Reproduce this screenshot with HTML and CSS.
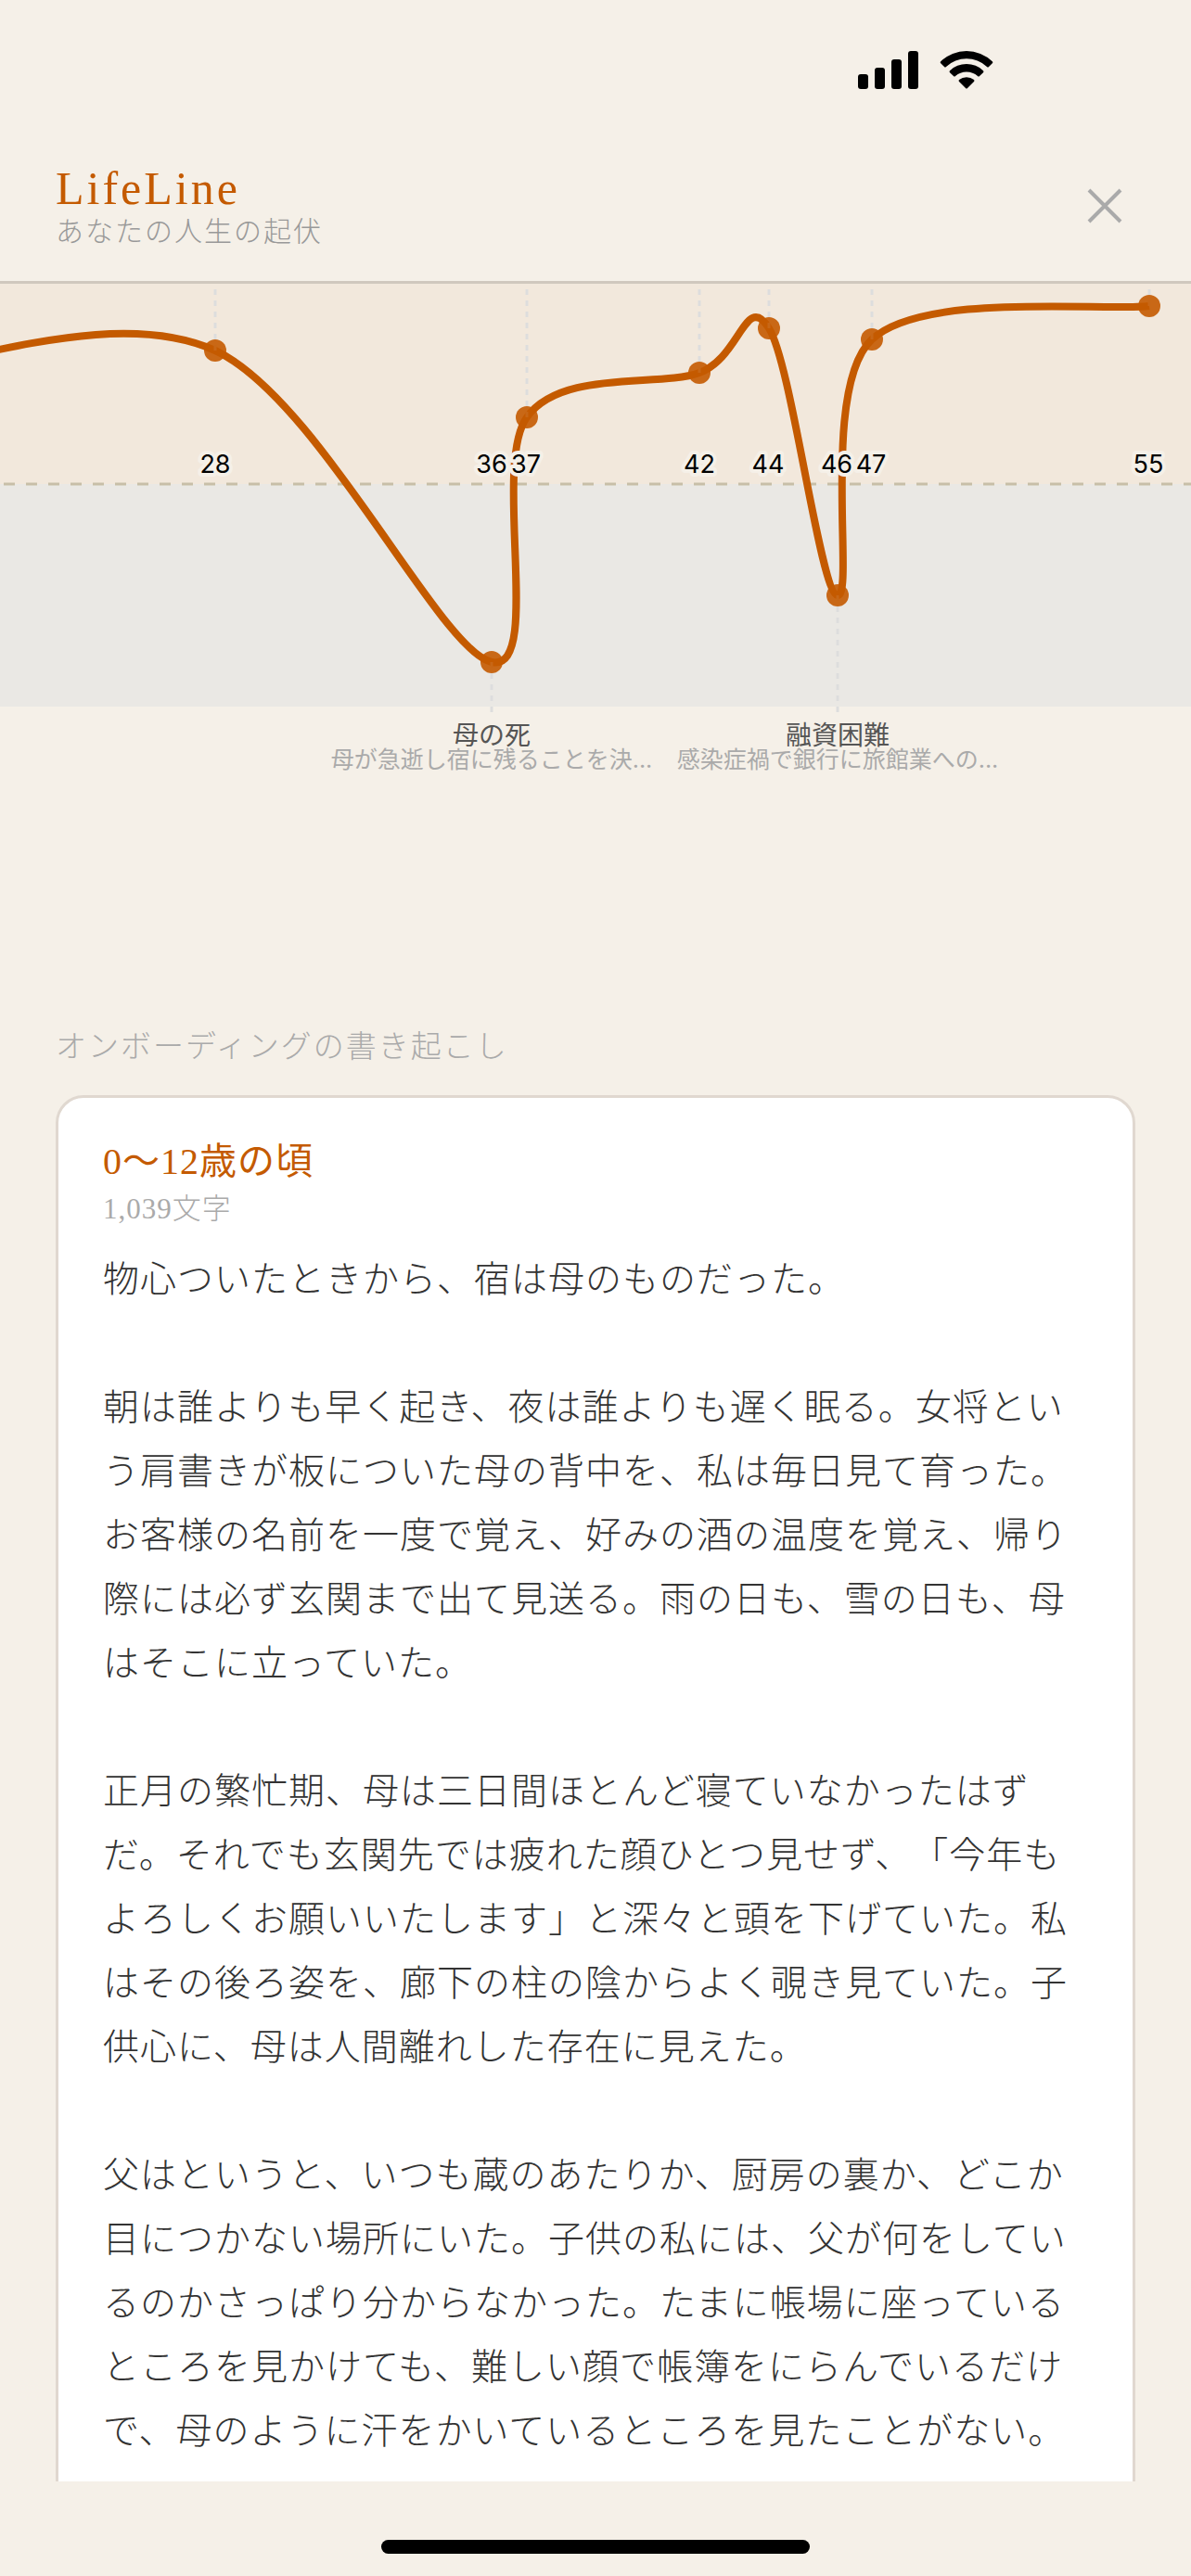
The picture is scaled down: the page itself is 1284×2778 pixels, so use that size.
FILE: index.html
```html
<!DOCTYPE html>
<html lang="ja">
<head>
    <meta charset="UTF-8">
    <meta name="viewport" content="width=device-width, initial-scale=1.0">
    <title>LifeLine</title>
    <link rel="stylesheet" href="styles.css">
</head>
<body>
    <div class="status-bar">
        <svg class="signal" viewBox="0 0 65 41" aria-hidden="true">
            <rect x="0" y="25" width="11" height="16" rx="3"/>
            <rect x="18" y="18" width="11" height="23" rx="3"/>
            <rect x="36" y="9" width="11" height="32" rx="3"/>
            <rect x="54" y="0" width="11" height="41" rx="3"/>
        </svg>
        <svg class="wifi" viewBox="0 0 58 42" aria-hidden="true">
            <path d="M1.2 12.2 Q0.2 13.2 1.2 14.2 L5 18 Q6 19 7 18 A32 32 0 0 1 51 18 Q52 19 53 18 L56.8 14.2 Q57.8 13.2 56.8 12.2 A40 40 0 0 0 1.2 12.2 Z"/>
            <path d="M11 22.2 Q10 23.2 11 24.2 L15 28 Q16 29 17 28 A18 18 0 0 1 41 28 Q42 29 43 28 L47 24.2 Q48 23.2 47 22.2 A26 26 0 0 0 11 22.2 Z"/>
            <path d="M21 32 Q20 33 21 34 L28 41 Q29 42 30 41 L37 34 Q38 33 37 32 A13 13 0 0 0 21 32 Z"/>
        </svg>
    </div>

    <header class="header">
        <div>
            <h1 class="title">LifeLine</h1>
            <p class="subtitle">あなたの人生の起伏</p>
        </div>
        <button type="button" class="close" aria-label="閉じる">
            <svg viewBox="0 0 60 60" aria-hidden="true">
                <path d="M13 13 L47 47 M47 13 L13 47"/>
            </svg>
        </button>
    </header>

    <main class="content">
        <svg class="chart" viewBox="0 0 1284 770" role="img" aria-label="人生の起伏グラフ">
            <rect class="area-up" x="0" y="0" width="1284" height="216"/>
            <rect class="area-down" x="0" y="216" width="1284" height="240"/>
            <line class="baseline" x1="4" y1="216" x2="1284" y2="216"/>

            <path class="curve" d="M-141 96 C-42 90 120 22 232 72 C344 124 474 396 530 408 C586 420 530 196 568 144 C605 92 711 112 754 96 C798 80 804 8 829 48 C854 88 884 334 903 336 C922 338 884 112 940 60 C996 8 1189 30 1239 24"/>

            <g class="guides">
                <line x1="232" y1="6" x2="232" y2="72"/>
                <line x1="568" y1="6" x2="568" y2="144"/>
                <line x1="754" y1="6" x2="754" y2="96"/>
                <line x1="829" y1="6" x2="829" y2="48"/>
                <line x1="940" y1="6" x2="940" y2="60"/>
                <line x1="1239" y1="6" x2="1239" y2="24"/>
                <line x1="530" y1="408" x2="530" y2="462"/>
                <line x1="903" y1="336" x2="903" y2="462"/>
            </g>

            <g class="points">
                <circle cx="232" cy="72" r="12"/>
                <circle cx="530" cy="408" r="12"/>
                <circle cx="568" cy="144" r="12"/>
                <circle cx="754" cy="96" r="12"/>
                <circle cx="829" cy="48" r="12"/>
                <circle cx="903" cy="336" r="12"/>
                <circle cx="940" cy="60" r="12"/>
                <circle cx="1239" cy="24" r="12"/>
            </g>

            <g class="ages">
                <text x="232" y="204">28</text>
                <text x="530" y="204">36</text>
                <text x="567" y="204">37</text>
                <text x="754" y="204">42</text>
                <text x="828" y="204">44</text>
                <text x="902" y="204">46</text>
                <text x="939" y="204">47</text>
                <text x="1238" y="204">55</text>
            </g>

            <text class="event" x="530" y="497">母の死</text>
            <text class="event-note" x="530" y="522">母が急逝し宿に残ることを決...</text>
            <text class="event" x="903" y="497">融資困難</text>
            <text class="event-note" x="903" y="522">感染症禍で銀行に旅館業への...</text>
        </svg>

        <section class="transcript">
            <h2 class="section-title">オンボーディングの書き起こし</h2>
            <article class="card">
                <h3 class="card-title">0〜12歳の頃</h3>
                <p class="card-count">1,039文字</p>
                <div class="card-body">
                    <p>物心ついたときから、宿は母のものだった。</p>
                    <p>朝は誰よりも早く起き、夜は誰よりも遅く眠る。女将という肩書きが板についた母の背中を、私は毎日見て育った。お客様の名前を一度で覚え、好みの酒の温度を覚え、帰り際には必ず玄関まで出て見送る。雨の日も、雪の日も、母はそこに立っていた。</p>
                    <p>正月の繁忙期、母は三日間ほとんど寝ていなかったはずだ。それでも玄関先では疲れた顔ひとつ見せず、「今年もよろしくお願いいたします」と深々と頭を下げていた。私はその後ろ姿を、廊下の柱の陰からよく覗き見ていた。子供心に、母は人間離れした存在に見えた。</p>
                    <p>父はというと、いつも蔵のあたりか、厨房の裏か、どこか目につかない場所にいた。子供の私には、父が何をしているのかさっぱり分からなかった。たまに帳場に座っているところを見かけても、難しい顔で帳簿をにらんでいるだけで、母のように汗をかいているところを見たことがない。</p>
                </div>
            </article>
        </section>
    </main>

    <footer class="home-bar">
        <span class="home-indicator"></span>
    </footer>
</body>
</html>
```
FILE: styles.css
```css
* {
    box-sizing: border-box;
    margin: 0;
    padding: 0;
}
body {
    display: flex;
    flex-direction: column;
    height: 100vh;
    background: #f5f0e8;
    color: #333;
    font-family: "Liberation Serif", "Noto Sans CJK JP", serif;
    text-spacing-trim: space-all;
}

/* status bar */
.status-bar {
    display: flex;
    flex-shrink: 0;
    justify-content: flex-end;
    align-items: center;
    gap: 23px;
    height: 150px;
    padding-right: 213px;
}
.signal {
    width: 65px;
    height: 41px;
}
.wifi {
    width: 58px;
    height: 42px;
}

/* header */
.header {
    display: flex;
    flex-shrink: 0;
    justify-content: space-between;
    align-items: center;
    height: 156px;
    padding: 0 63px 9px 60px;
    border-bottom: 3px solid #d0c8be;
}
.title {
    color: #c45a00;
    font-size: 50px;
    font-weight: normal;
    line-height: 54px;
    letter-spacing: 3px;
}
.subtitle {
    color: #999;
    font-size: 30px;
    font-weight: 300;
    line-height: 39px;
    letter-spacing: 2px;
}
.close {
    width: 60px;
    height: 60px;
    border: none;
    background: none;
    cursor: pointer;
}
.close svg {
    display: block;
    fill: none;
    stroke: #aaa;
    stroke-width: 4;
}

.content {
    flex: 1;
    min-height: 0;
    overflow: hidden;
}

/* chart */
.chart {
    display: block;
    width: 100%;
    font-family: Inter, "Noto Sans CJK JP", sans-serif;
    text-anchor: middle;
}
.area-up {
    fill: #f2e8dc;
}
.area-down {
    fill: #eae8e4;
}
.baseline {
    stroke: #c8bfa8;
    stroke-width: 3;
    stroke-dasharray: 12 12;
}
.curve {
    fill: none;
    stroke: #c45a00;
    stroke-width: 8;
}
.guides {
    stroke: #ddd;
    stroke-width: 3;
    stroke-dasharray: 6 6;
}
.points {
    fill: #c45a00;
    fill-opacity: 0.9;
}
.ages {
    font-size: 27px;
    fill: #000;
    stroke: #f5f0e8;
    stroke-width: 8;
    stroke-linejoin: round;
    paint-order: stroke;
}
.event {
    font-size: 28px;
    fill: #555;
}
.event-note {
    font-size: 25px;
    fill: #aaa;
}

/* transcript */
.transcript {
    padding: 29px 60px 60px;
}
.section-title {
    margin-bottom: 28px;
    color: #aaa;
    font-size: 33px;
    font-weight: 300;
    line-height: 48px;
    letter-spacing: 2px;
}
.card {
    padding: 42px 48px 96px;
    border: 3px solid #e0d8d0;
    border-radius: 30px;
    background: #fff;
}
.card-title {
    color: #c45a00;
    font-size: 40px;
    font-weight: normal;
    line-height: 54px;
    letter-spacing: 1px;
}
.card-count {
    margin-bottom: 17px;
    color: #aaa;
    font-size: 31px;
    font-weight: 300;
    line-height: 48px;
    letter-spacing: 1px;
}
.card-body {
    font-size: 39px;
    font-weight: 300;
    line-height: 69px;
    letter-spacing: 1px;
}
.card-body p + p {
    margin-top: 69px;
}

.home-bar {
    display: flex;
    flex-shrink: 0;
    justify-content: center;
    align-items: flex-end;
    height: 102px;
    padding-bottom: 24px;
}
.home-indicator {
    width: 36%;
    height: 15px;
    border-radius: 8px;
    background: #000;
}
```
